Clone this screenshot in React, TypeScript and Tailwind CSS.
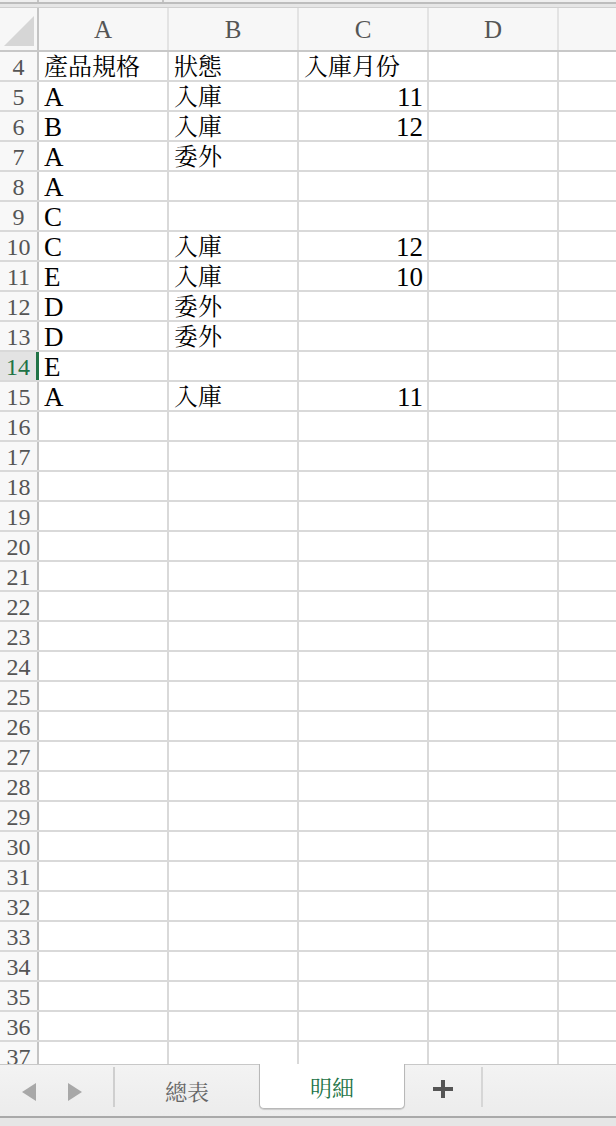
import React from "react";

const rows: { n: number; a?: string; b?: string; c?: string }[] = [
  { n: 4, a: "產品規格", b: "狀態", c: "入庫月份" },
  { n: 5, a: "A", b: "入庫", c: "11" },
  { n: 6, a: "B", b: "入庫", c: "12" },
  { n: 7, a: "A", b: "委外" },
  { n: 8, a: "A" },
  { n: 9, a: "C" },
  { n: 10, a: "C", b: "入庫", c: "12" },
  { n: 11, a: "E", b: "入庫", c: "10" },
  { n: 12, a: "D", b: "委外" },
  { n: 13, a: "D", b: "委外" },
  { n: 14, a: "E" },
  { n: 15, a: "A", b: "入庫", c: "11" },
];
for (let i = 16; i <= 37; i++) rows.push({ n: i });

const font = {
  fontFamily: '"Liberation Serif", "Noto Serif CJK TC", "Noto Sans CJK TC", serif',
};

const isNum = (s?: string) => !!s && /^\d+$/.test(s);
const isLatin = (s?: string) => !!s && /^[A-Za-z0-9]+$/.test(s);

function Cell({ v, first }: { v?: string; first?: boolean }) {
  const right = isNum(v) && !first;
  return (
    <div
      className={`w-[130px] shrink-0 h-full border-r-2 border-[#d9d9d9] flex items-end ${
        right ? "justify-end pr-[4px]" : "pl-[5px]"
      }`}
    >
      {v && (
        <span
          className={`${isLatin(v) ? "text-[27px]" : "text-[24px]"} leading-[25px] text-black whitespace-nowrap`}
        >
          {v}
        </span>
      )}
    </div>
  );
}

export default function App() {
  return (
    <div className="w-[616px] h-[1126px] bg-white overflow-hidden flex flex-col" style={font}>
      {/* top strip */}
      <div className="h-[2px] flex bg-[#efefef]">
        <div className="w-[37px]" />
        <div className="w-[2px] bg-[#c4c4c4]" />
        <div className="w-[123px]" />
        <div className="w-[2px] bg-[#c4c4c4]" />
      </div>
      <div className="h-[2px] bg-[#bdbdbd]" />
      <div className="h-[3px] bg-[#e6e6e6]" />
      <div className="h-[1px] bg-[#cfcfcf]" />

      {/* sheet */}
      <div className="flex-1 overflow-hidden flex flex-col">
        {/* header row */}
        <div className="h-[44px] shrink-0 flex bg-[#f7f7f7] border-b-2 border-[#c8c8c8]">
          <div className="w-[39px] shrink-0 border-r-2 border-[#c4c4c4] flex items-end justify-end pb-[4px] pr-[3px]">
            <svg width="30" height="30" viewBox="0 0 30 30">
              <polygon points="0,30 30,30 30,0" fill="#d6d6d6" />
            </svg>
          </div>
          {["A", "B", "C", "D", ""].map((h, i) => (
            <div
              key={i}
              className="w-[130px] shrink-0 border-r-2 border-[#e3e3e3] flex items-center justify-center pt-[2px] text-[25px] text-[#555555]"
            >
              {h}
            </div>
          ))}
        </div>

        {rows.map((r) => {
          const active = r.n === 14;
          return (
            <div key={r.n} className="h-[30px] shrink-0 flex border-b-2 border-[#d9d9d9]">
              <div
                className={`w-[39px] shrink-0 flex items-end justify-center text-[24px] leading-[25px] ${
                  active
                    ? "bg-[#e3e3e3] text-[#217346] border-r-[3px] border-[#217346]"
                    : "bg-[#f8f8f8] text-[#555555] border-r-2 border-[#c4c4c4]"
                }`}
              >
                {r.n}
              </div>
              <Cell v={r.a} first />
              <Cell v={r.b} />
              <Cell v={r.c} />
              <Cell />
              <Cell />
            </div>
          );
        })}
      </div>

      {/* tab bar */}
      <div className="h-[52px] shrink-0 flex bg-gradient-to-b from-[#f3f3f3] to-[#ececec] border-t border-[#c8c8c8]">
        <div className="w-[113px] shrink-0 flex items-center pt-[2px]">
          <svg width="14" height="18" viewBox="0 0 14 18" className="ml-[22px]">
            <polygon points="14,0 14,18 0,9" fill="#a8a8a8" />
          </svg>
          <svg width="14" height="18" viewBox="0 0 14 18" className="ml-[32px]">
            <polygon points="0,0 0,18 14,9" fill="#a8a8a8" />
          </svg>
        </div>
        <div className="w-[2px] my-[2px] mb-[9px] bg-[#cfcfcf]" />
        <div className="w-[144px] shrink-0 flex items-center justify-center pt-[4px] text-[22px] text-[#666666]">
          總表
        </div>
        <div className="w-[146px] shrink-0 -mt-px h-[45px] bg-white border-x border-b border-[#b8b8b8] rounded-b-[5px] shadow-[0_1px_1px_rgba(0,0,0,0.15)] flex items-center justify-center pt-[4px] text-[22px] text-[#217346]">
          明細
        </div>
        <div className="w-[76px] shrink-0 flex items-center justify-center pb-[4px]">
          <svg width="20" height="18" viewBox="0 0 20 18">
            <rect x="0" y="7" width="20" height="4" fill="#555555" />
            <rect x="8" y="0" width="4" height="18" fill="#555555" />
          </svg>
        </div>
        <div className="w-[2px] my-[2px] mb-[9px] bg-[#d6d6d6]" />
      </div>
      <div className="h-[2px] shrink-0 bg-[#a9a9a9]" />
      <div className="h-[8px] shrink-0 bg-[#e6e6e6]" />
    </div>
  );
}
